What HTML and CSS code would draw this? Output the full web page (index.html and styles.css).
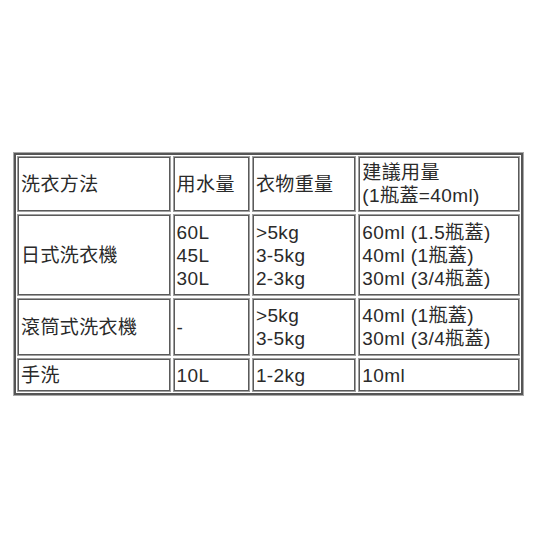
FILE: index.html
```html
<!DOCTYPE html>
<html lang="zh-Hant">
<head>
<meta charset="utf-8">
<link rel="stylesheet" href="styles.css">
</head>
<body>
<div class="page">
<table class="usage">
  <colgroup>
    <col class="c1"><col class="c2"><col class="c3"><col class="c4">
  </colgroup>
  <tr class="r-head">
    <td>洗衣方法</td>
    <td>用水量</td>
    <td>衣物重量</td>
    <td>建議用量<br>(1瓶蓋=40ml)</td>
  </tr>
  <tr class="r-three">
    <td>日式洗衣機</td>
    <td>60L<br>45L<br>30L</td>
    <td>&gt;5kg<br>3-5kg<br>2-3kg</td>
    <td>60ml (1.5瓶蓋)<br>40ml (1瓶蓋)<br>30ml (3/4瓶蓋)</td>
  </tr>
  <tr class="r-two">
    <td>滾筒式洗衣機</td>
    <td>-</td>
    <td>&gt;5kg<br>3-5kg</td>
    <td>40ml (1瓶蓋)<br>30ml (3/4瓶蓋)</td>
  </tr>
  <tr class="r-one">
    <td>手洗</td>
    <td>10L</td>
    <td>1-2kg</td>
    <td>10ml</td>
  </tr>
</table>
</div>
</body>
</html>
```
FILE: styles.css
```css
html, body {
  margin: 0;
  padding: 0;
  background: #ffffff;
}
.page {
  padding: 152px 0 0 13px;
}
.usage {
  border-collapse: separate;
  border-spacing: 2px;
  border: 1px solid #a8a8a8;
  padding: 1px;
  box-shadow: inset 0 0 0 2px #555555;
  table-layout: fixed;
  width: 511px;
  font-family: "Liberation Sans", Arial, "Noto Sans CJK TC", sans-serif;
  font-size: 19px;
  line-height: 23px;
  letter-spacing: 0.4px;
  color: #2a2a2a;
}
.c1 { width: 153px; }
.c2 { width: 77px; }
.c3 { width: 104px; }
.c4 { width: 161px; }
.usage td {
  border: 1px solid #a0a0a0;
  box-shadow: inset 0 0 0 1px #5a5a5a;
  padding: 1px 0 1px 3px;
  vertical-align: middle;
  white-space: nowrap;
}
.r-head td { height: 52px; }
.r-three td { height: 78px; }
.r-two td { height: 54px; }
.r-one td { height: 30px; }
```
